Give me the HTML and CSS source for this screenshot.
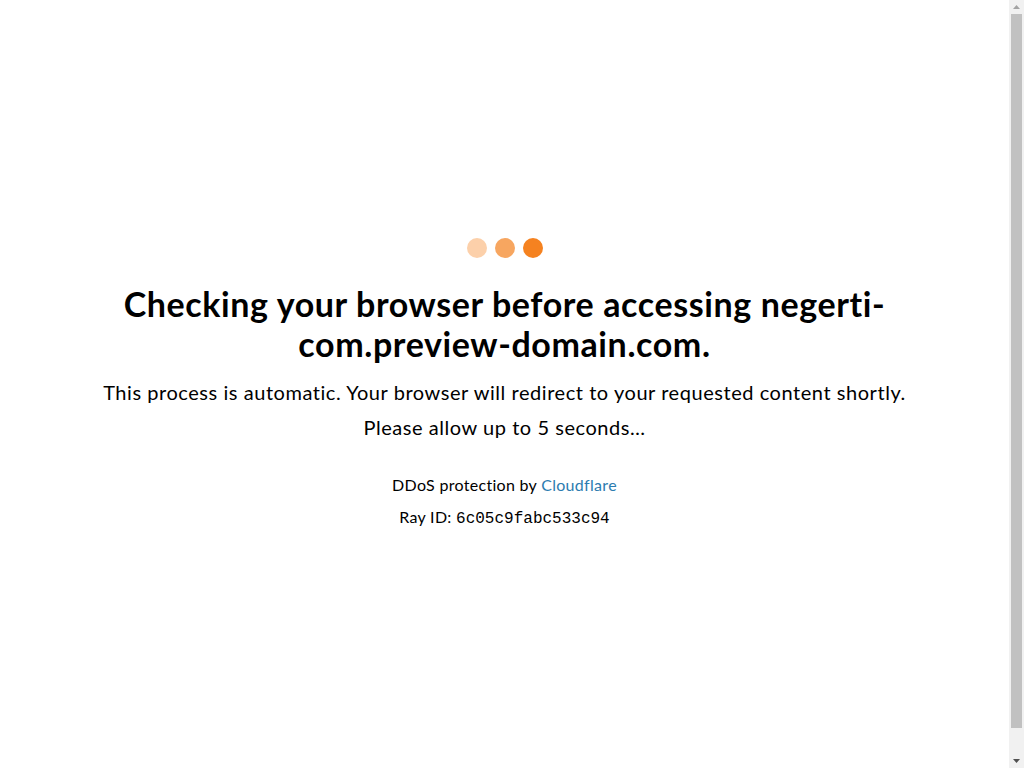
FILE: index.html
```html
<!DOCTYPE html>
<html lang="en">
<head>
<meta charset="utf-8">
<title>Just a moment...</title>
<link rel="stylesheet" href="styles.css">
</head>
<body>
<div class="container">
  <div class="spinner">
    <span class="bubble b1"></span>
    <span class="bubble b2"></span>
    <span class="bubble b3"></span>
  </div>
  <h1 class="title">Checking your browser before accessing negerti-com.preview-domain.com.</h1>
  <p class="lead">This process is automatic. Your browser will redirect to your requested content shortly.</p>
  <p class="lead second">Please allow up to 5 seconds&hellip;</p>
  <div class="attribution">
    <div class="attr-line">DDoS protection by <a href="#" class="link">Cloudflare</a></div>
    <div class="attr-line">Ray ID: <code class="ray">6c05c9fabc533c94</code></div>
  </div>
</div>
<div class="scrollbar" aria-hidden="true">
  <svg class="arrow arrow-up" width="15" height="14" viewBox="0 0 15 14"><polygon points="4,9 11,9 7.5,5" fill="#a3a3a3"/></svg>
  <div class="thumb"></div>
  <svg class="arrow arrow-down" width="15" height="14" viewBox="0 0 15 14"><polygon points="4,5 11,5 7.5,9" fill="#505050"/></svg>
</div>
</body>
</html>
```

FILE: styles.css
```css
html {
  height: 100%;
}
body {
  margin: 0 15px 0 0;
  height: 100%;
  background: #ffffff;
  color: #000000;
  font-family: Lato, "Liberation Sans", sans-serif;
  display: flex;
  align-items: center;
  justify-content: center;
}
.container {
  width: 860px;
  padding-top: 5px;
  text-align: center;
}
.spinner {
  display: flex;
  justify-content: center;
  gap: 8px;
  margin-bottom: 26px;
}
.bubble {
  width: 20px;
  height: 20px;
  border-radius: 50%;
  background: #f58220;
}
.b1 { background: #fcd0aa; }
.b2 { background: #f7a660; }
.b3 { background: #f58220; }
.title {
  font-size: 34px;
  font-weight: 700;
  line-height: 40px;
  letter-spacing: 0.6px;
  margin: 0 0 11px;
}
.lead {
  font-size: 20px;
  line-height: 34px;
  letter-spacing: 0.55px;
  margin: 0;
}
.second {
  margin-top: 1px;
}
.attribution {
  margin-top: 25px;
  font-size: 16px;
  letter-spacing: 0.3px;
}
.attr-line {
  line-height: 32px;
}
.link {
  color: #2c7cb0;
  text-decoration: none;
}
.ray {
  font-family: "Liberation Mono", monospace;
  font-size: 16px;
  letter-spacing: 0;
}
.scrollbar {
  position: fixed;
  top: 0;
  right: 0;
  width: 15px;
  height: 100%;
  background: #f1f1f1;
  display: flex;
  flex-direction: column;
  align-items: center;
}
.arrow {
  flex: none;
  display: block;
}
.thumb {
  flex: 1;
  width: 11px;
  margin: 0 0 26px;
  background: #c1c1c1;
}
```
